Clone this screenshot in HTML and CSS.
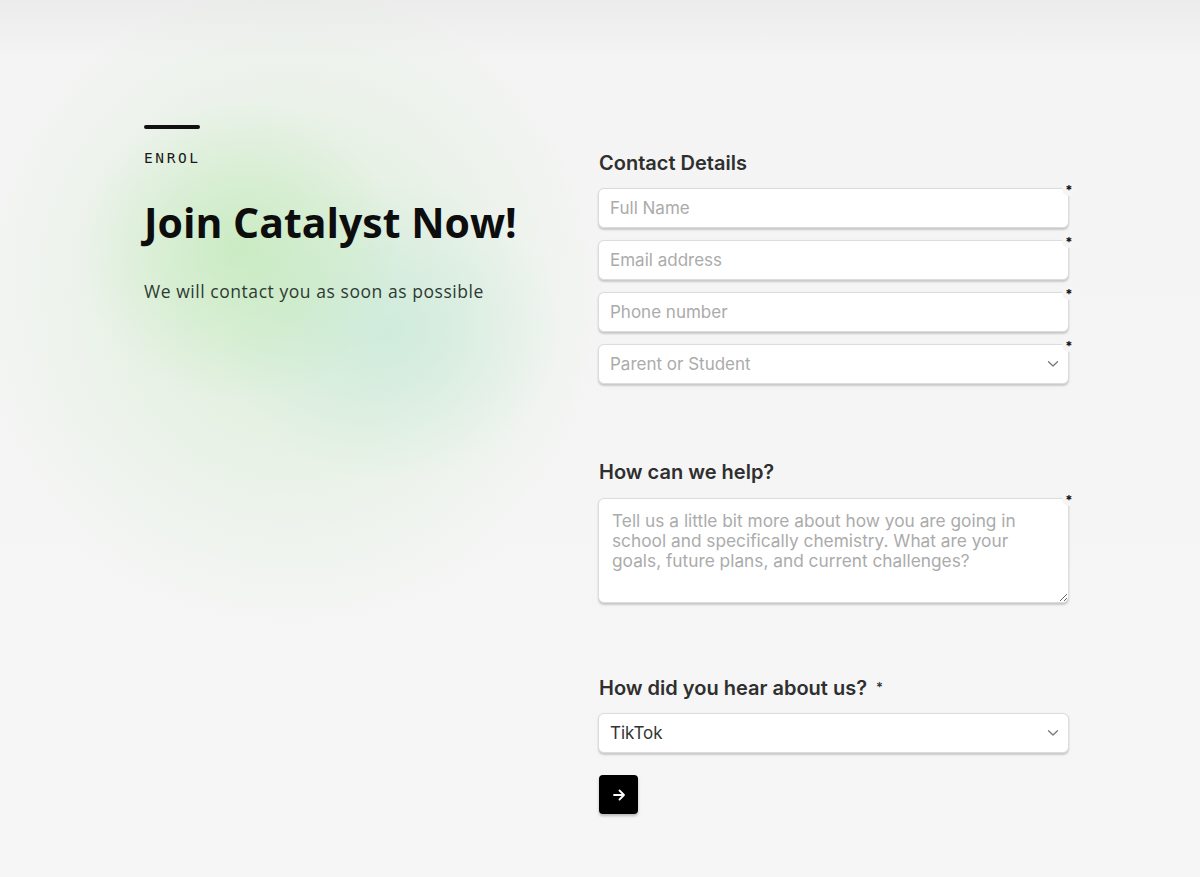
FILE: index.html
```html
<!DOCTYPE html>
<html lang="en">
<head>
  <meta charset="UTF-8">
  <meta name="viewport" content="width=device-width, initial-scale=1.0">
  <title>Enrol - Catalyst</title>
  <link rel="stylesheet" href="styles.css">
</head>
<body>
    <main class="enrol">
        <section class="intro">
            <div class="intro-bar"></div>
            <p class="eyebrow">ENROL</p>
            <h1>Join Catalyst Now!</h1>
            <p class="lead">We will contact you as soon as possible</p>
        </section>

        <form class="form">
            <div class="group">
                <h2>Contact Details</h2>
                <div class="field">
                    <input type="text" placeholder="Full Name">
                    <span class="req">*</span>
                </div>
                <div class="field">
                    <input type="email" placeholder="Email address">
                    <span class="req">*</span>
                </div>
                <div class="field">
                    <input type="tel" placeholder="Phone number">
                    <span class="req">*</span>
                </div>
                <div class="field select-field">
                    <select class="placeholder">
                        <option selected disabled>Parent or Student</option>
                        <option>Parent</option>
                        <option>Student</option>
                    </select>
                    <svg class="chevron" width="12" height="8" viewBox="0 0 12 8"><path d="M1.5 1.8 L6 6 L10.5 1.8" fill="none" stroke="#777" stroke-width="1.3" stroke-linecap="round" stroke-linejoin="round"/></svg>
                    <span class="req">*</span>
                </div>
            </div>

            <div class="group help">
                <h2>How can we help?</h2>
                <div class="field">
                    <textarea placeholder="Tell us a little bit more about how you are going in school and specifically chemistry. What are your goals, future plans, and current challenges?"></textarea>
                    <span class="req">*</span>
                </div>
            </div>

            <div class="group hear">
                <h2>How did you hear about us? <span class="req-inline">*</span></h2>
                <div class="field select-field">
                    <select>
                        <option selected>TikTok</option>
                        <option>Instagram</option>
                        <option>Google</option>
                        <option>A friend</option>
                    </select>
                    <svg class="chevron" width="12" height="8" viewBox="0 0 12 8"><path d="M1.5 1.8 L6 6 L10.5 1.8" fill="none" stroke="#777" stroke-width="1.3" stroke-linecap="round" stroke-linejoin="round"/></svg>
                </div>
                <button type="button" class="submit" aria-label="Submit">
                    <svg width="16" height="16" viewBox="0 0 16 16"><path d="M3 8 H13 M8.5 3.5 L13 8 L8.5 12.5" fill="none" stroke="#fff" stroke-width="1.8" stroke-linecap="round" stroke-linejoin="round"/></svg>
                </button>
            </div>
        </form>
    </main>
</body>
</html>
```

FILE: styles.css
```css
* {
  margin: 0;
  padding: 0;
  box-sizing: border-box;
}

html, body {
  height: 100%;
}

body {
  font-family: 'Inter', 'Liberation Sans', sans-serif;
  color: #2b2b2b;
  background:
    radial-gradient(ellipse 160px 150px at 240px 250px, rgba(196, 234, 188, 0.8), rgba(196, 234, 188, 0) 100%),
    radial-gradient(ellipse 170px 150px at 390px 330px, rgba(200, 233, 218, 0.75), rgba(200, 233, 218, 0) 100%),
    radial-gradient(ellipse 320px 330px at 290px 300px, rgba(216, 238, 212, 0.85), rgba(232, 242, 232, 0) 100%),
    linear-gradient(180deg, #ececec 0px, #f4f4f4 60px, #f6f6f6 100%);
  overflow: hidden;
}

.enrol {
  display: grid;
  grid-template-columns: 454px 471px;
  padding: 125px 0 0 144px;
}

/* left side */
.intro-bar {
  width: 56px;
  height: 4px;
  border-radius: 2px;
  background: #111;
}

.eyebrow {
  margin-top: 21px;
  font-family: 'DejaVu Sans Mono', monospace;
  font-size: 14.5px;
  letter-spacing: 2.6px;
  color: #1a1a1a;
}

.intro h1 {
  margin-top: 30px;
  font-family: 'Open Sans', 'Liberation Sans', sans-serif;
  font-weight: 700;
  font-size: 41px;
  line-height: 52px;
  letter-spacing: 0;
  color: #0d0d0d;
}

.lead {
  margin-top: 31px;
  font-family: 'Open Sans', 'Liberation Sans', sans-serif;
  font-size: 17.5px;
  letter-spacing: 0.55px;
  color: #2e3a33;
}

/* form */
.form {
  padding-top: 25px;
}

.group h2 {
  font-size: 20px;
  font-weight: 600;
  color: #2f2f2f;
  line-height: 26px;
  margin-bottom: 12px;
  padding-left: 1px;
}

.field {
  position: relative;
  margin-bottom: 12px;
}

.field input,
.field select,
.field textarea {
  display: block;
  width: 100%;
  height: 40px;
  padding: 0 11px;
  font-family: 'Inter', 'Liberation Sans', sans-serif;
  font-size: 17px;
  color: #333;
  background: #fff;
  border: 1px solid #dcdcdc;
  border-radius: 6px;
  box-shadow: 0 1.5px 2px rgba(0, 0, 0, 0.18);
  outline: none;
  appearance: none;
  -webkit-appearance: none;
}

::placeholder {
  color: #ababab;
}

.field select.placeholder {
  color: #ababab;
}

.chevron {
  position: absolute;
  right: 10px;
  top: 16px;
  pointer-events: none;
}

.field textarea {
  height: 105px;
  padding: 12px 40px 12px 13px;
  font-size: 17.3px;
  line-height: 20px;
  resize: vertical;
}

.req {
  position: absolute;
  top: -6px;
  right: -7px;
  width: 14px;
  height: 14px;
  border-radius: 50%;
  background: #f5f5f5;
  font-size: 13px;
  font-weight: 700;
  line-height: 17px;
  text-align: center;
  color: #111;
}

.req-inline {
  display: inline-block;
  margin-left: 4px;
  font-size: 13px;
  vertical-align: 3px;
  color: #333;
}

.help {
  margin-top: 75px;
}

.help h2 {
  margin-bottom: 13px;
}

.hear {
  margin-top: 71px;
}

.hear .field {
  margin-bottom: 22px;
}

.submit {
  display: flex;
  align-items: center;
  justify-content: center;
  width: 39px;
  height: 39px;
  margin-left: 1px;
  background: #000;
  border: none;
  border-radius: 4px;
  box-shadow: 0 2px 3px rgba(0, 0, 0, 0.25);
  cursor: pointer;
}
```
